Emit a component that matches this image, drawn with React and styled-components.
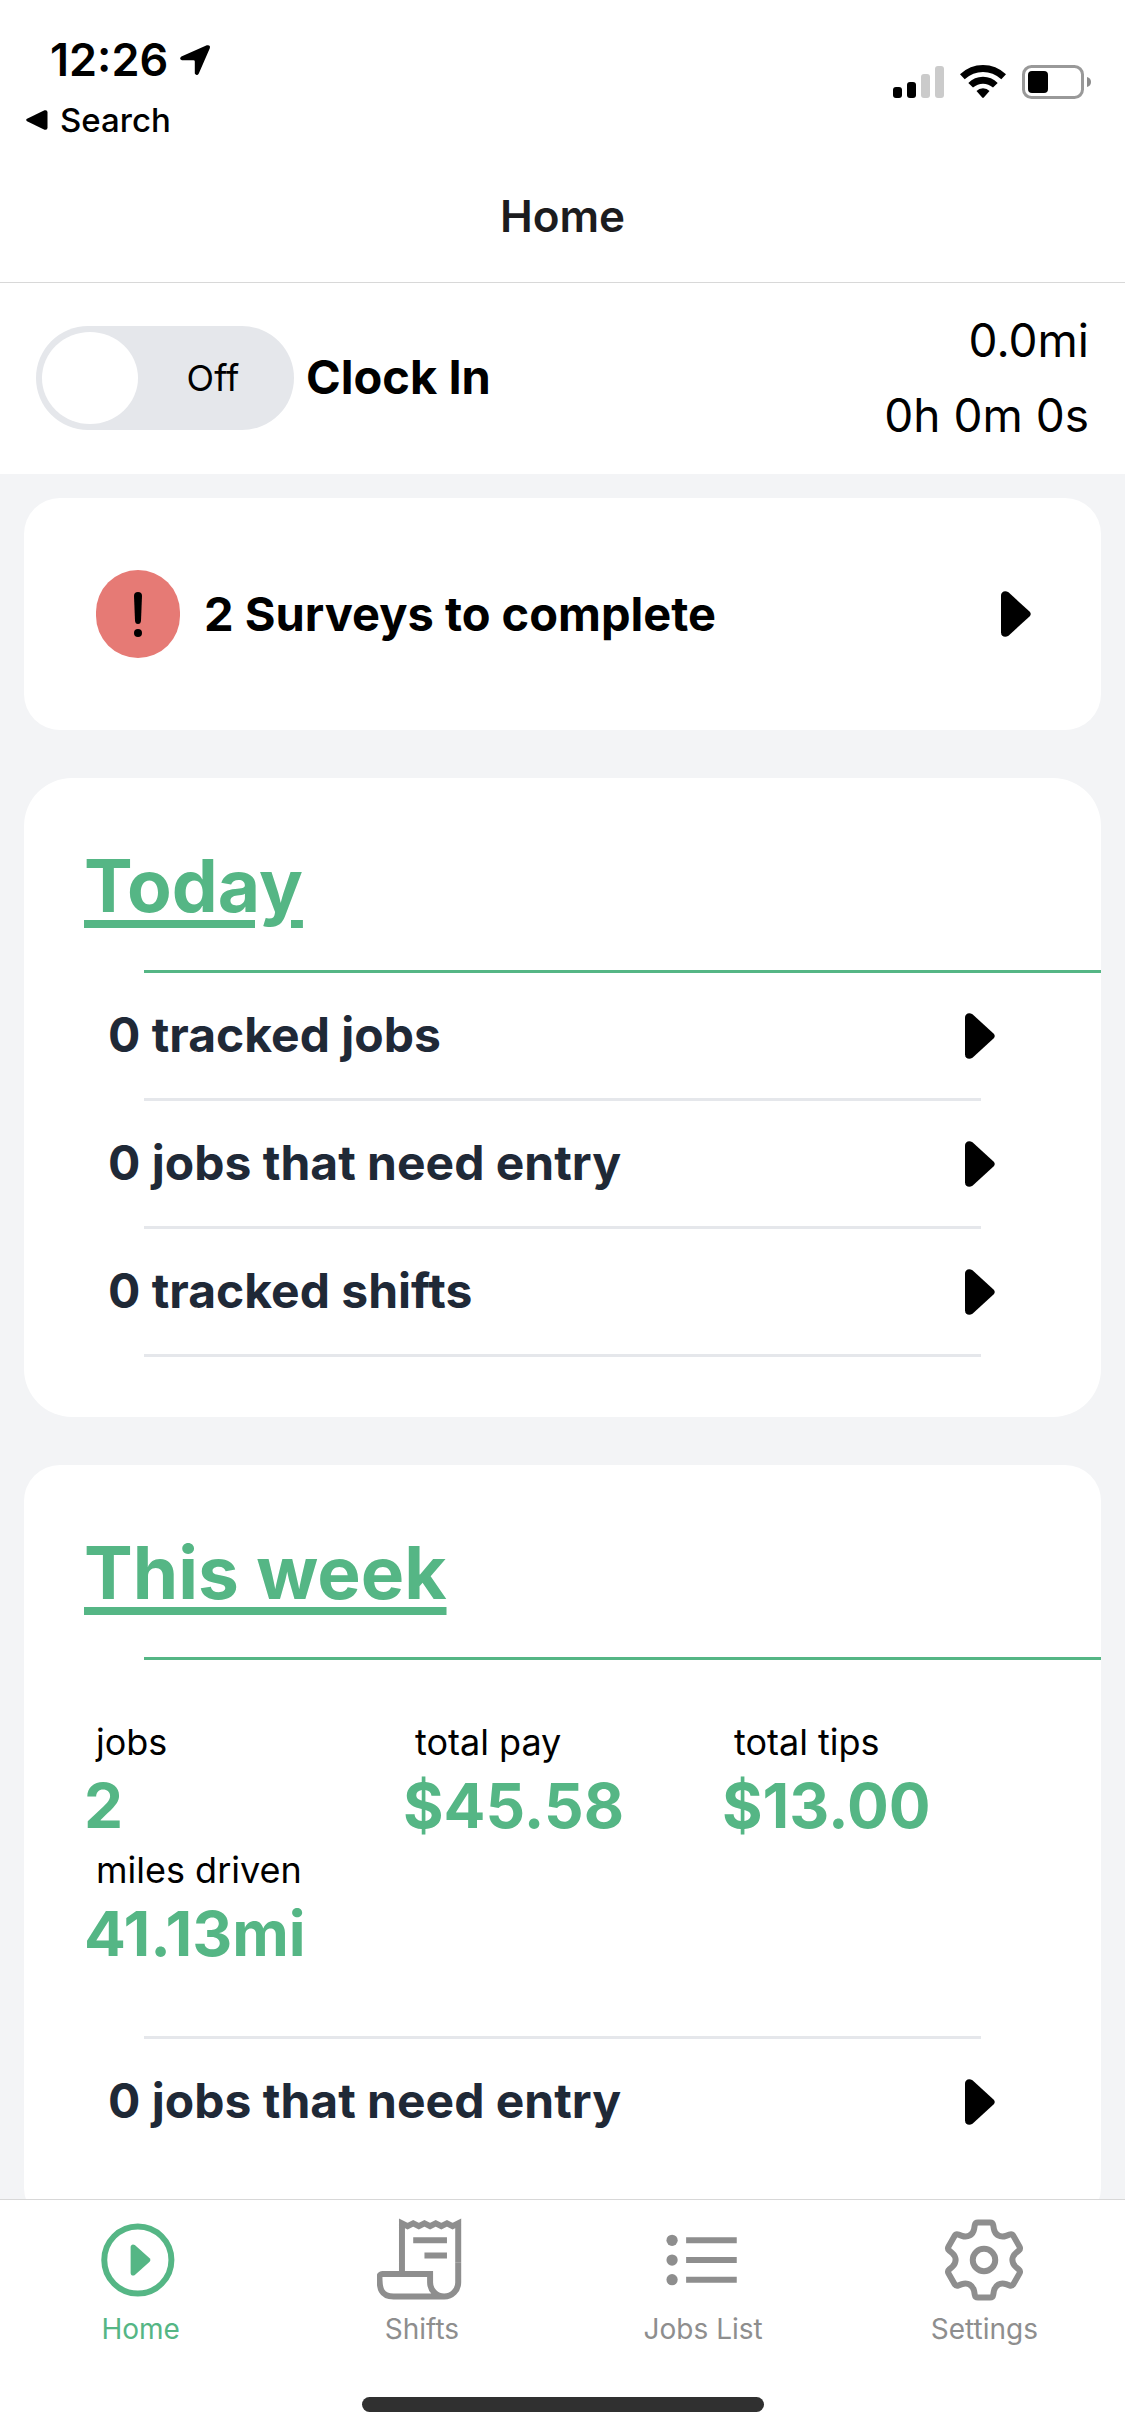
import React, { useState } from "react";
import styled, { createGlobalStyle } from "styled-components";

const color = {
  green: "#55b685",
  ink: "#1f2937",
  title: "#1c1c1e",
  canvas: "#f3f4f6",
  track: "#e5e7eb",
  hairline: "#d8d8d8",
  muted: "#8e8e8e",
  alert: "#e67a75",
};

const GlobalStyle = createGlobalStyle`
  *, *::before, *::after { box-sizing: border-box; }
  body { margin: 0; background: #fff; }
  button { border: 0; background: none; padding: 0; margin: 0; font: inherit; color: inherit; text-align: left; cursor: pointer; }
  h1, h2, dl, dd, p, ul { margin: 0; padding: 0; }
`;

const Screen = styled.div`
  display: flex;
  flex-direction: column;
  height: 100vh;
  background: #fff;
  color: #000;
  font-family: Inter, "Liberation Sans", sans-serif;
`;

/* Status bar */
const StatusBar = styled.div`
  display: flex;
  justify-content: space-between;
  align-items: flex-start;
  padding: 30px 34px 0 26px;
`;

const Clock = styled.div`
  display: flex;
  align-items: center;
  gap: 12px;
  padding-left: 24px;
  font-size: 45px;
  font-weight: 600;
  line-height: 60px;
`;

const BackButton = styled.button`
  display: flex;
  align-items: center;
  gap: 12px;
  font-size: 33px;
  font-weight: 500;
  line-height: 60px;
`;

const StatusIcons = styled.div`
  display: flex;
  align-items: center;
  gap: 16px;
  padding-top: 35px;
`;

/* Header */
const Header = styled.header`
  border-bottom: 1px solid ${color.hairline};
`;

const PageTitle = styled.h1`
  font-size: 44px;
  font-weight: 600;
  line-height: 132px;
  text-align: center;
  color: ${color.title};
`;

/* Clock-in strip */
const ClockStrip = styled.section`
  display: flex;
  align-items: center;
  justify-content: space-between;
  padding: 20px 36px 21px;
`;

const SwitchLabel = styled.label`
  display: flex;
  align-items: center;
  gap: 12px;
  font-size: 47px;
  font-weight: 700;
  cursor: pointer;
`;

const SwitchText = styled.span`
  padding-bottom: 4px;
`;

const SwitchInput = styled.input`
  position: absolute;
  opacity: 0;
`;

const Track = styled.span`
  display: flex;
  flex-direction: ${(p) => (p.$on ? "row-reverse" : "row")};
  align-items: center;
  width: 258px;
  height: 104px;
  padding: 6px;
  border-radius: 52px;
  background: ${(p) => (p.$on ? color.green : color.track)};
`;

const Knob = styled.span`
  width: 96px;
  height: 92px;
  border-radius: 50%;
  background: #fff;
`;

const SwitchState = styled.span`
  flex: 1;
  text-align: center;
  font-size: 36px;
  font-weight: 400;
`;

const Readout = styled.div`
  text-align: right;
  font-size: 46px;
  line-height: 75px;
`;

/* Scrolling content */
const Content = styled.main`
  flex: 1;
  min-height: 0;
  overflow-y: auto;
  scrollbar-width: none;
  display: flex;
  flex-direction: column;
  gap: 48px;
  padding: 24px;
  background: ${color.canvas};
`;

const Card = styled.section`
  flex: none;
  padding: 60px 0;
  border-radius: ${(p) => p.$radius}px;
  background: #fff;
`;

const SurveyCard = styled.button`
  flex: none;
  display: flex;
  align-items: center;
  gap: 24px;
  padding: 72px 70px 72px 72px;
  border-radius: 36px;
  background: #fff;
  font-size: 47px;
  font-weight: 700;
`;

const AlertBadge = styled.span`
  display: flex;
  align-items: center;
  justify-content: center;
  width: 84px;
  height: 88px;
  border-radius: 42px;
  background: ${color.alert};
`;

const Grow = styled.span`
  flex: 1;
  padding-bottom: 2px;
`;

const CardTitle = styled.h2`
  padding: 0 60px;
  margin-bottom: 36px;
  font-size: 73px;
  font-weight: 700;
  line-height: 96px;
  color: ${color.green};
  text-decoration: underline;
  text-decoration-thickness: 8px;
  text-underline-offset: 8px;
`;

const Rule = styled.hr`
  height: 3px;
  margin: 0 ${(p) => (p.$accent ? 0 : 120)}px 0 120px;
  border: 0;
  background: ${(p) => (p.$accent ? color.green : color.track)};
`;

const Row = styled.button`
  display: flex;
  align-items: center;
  width: 100%;
  height: 125px;
  padding: 0 106px 0 84px;
  font-size: 48px;
  font-weight: 700;
  color: ${color.ink};
`;

const Stats = styled.dl`
  display: grid;
  grid-template-columns: repeat(3, 1fr);
  padding: 58px 60px 62px;
`;

const StatLabel = styled.dt`
  padding-left: 12px;
  font-size: 36px;
  line-height: 48px;
`;

const StatValue = styled.dd`
  font-size: 62px;
  font-weight: 700;
  line-height: 80px;
  color: ${color.green};
`;

/* Bottom navigation */
const TabBar = styled.nav`
  border-top: 1px solid ${color.hairline};
  background: #fff;
`;

const Tabs = styled.div`
  display: grid;
  grid-template-columns: repeat(4, 1fr);
  padding: 15px 0 50px;
`;

const Tab = styled.a`
  display: flex;
  flex-direction: column;
  align-items: center;
  gap: 6px;
  font-size: 28px;
  line-height: 36px;
  text-decoration: none;
  color: ${(p) => (p.$active ? color.green : color.muted)};
`;

const HomeIndicator = styled.div`
  width: 402px;
  height: 15px;
  margin: 0 auto 24px;
  border-radius: 8px;
  background: #303030;
`;

/* Icons */
const Caret = () => (
  <svg width="30" height="46" viewBox="0 0 30 46" aria-hidden="true">
    <path d="M0 4.5C0 .6 4 -1 7.500 1.300L28.500 20.500Q31 23 28.500 25.500L7.500 44.700C4 47 0 45.400 0 41.500Z" />
  </svg>
);

const LocationArrow = () => (
  <svg width="30" height="30" viewBox="0 0 30 30" aria-hidden="true">
    <path d="M1.400 11.600L26.800.3Q30.800 -.6 29.800 3.200L18.800 28.600Q17 31.500 14.800 28.600V16.500Q14.800 15.200 13.500 15.200H2Q-1.400 14 1.400 11.600Z" />
  </svg>
);

const BackTriangle = () => (
  <svg width="22" height="20" viewBox="0 0 22 20" aria-hidden="true">
    <path d="M1 8.800L18.500.3Q21.500 -.5 21.500 2.500V17.500Q21.500 20.500 18.500 19.700L1 11.200Q-.6 10 1 8.800Z" />
  </svg>
);

const Signal = () => (
  <svg width="51" height="34" viewBox="0 0 51 34" aria-label="Signal">
    <rect x="0" y="22" width="9" height="11" rx="3" />
    <rect x="14" y="17" width="9" height="16" rx="3" />
    <rect x="28" y="9" width="9" height="24" rx="3" fill="#cbcbcb" />
    <rect x="42" y="1" width="9" height="32" rx="3" fill="#cbcbcb" />
  </svg>
);

const Wifi = () => (
  <svg width="46" height="34" viewBox="0 0 46 34" aria-label="Wi-Fi">
    <path d="M0 9.200Q10 0 23 0T46 9.200L41.300 14.200Q33 7 23 7T4.700 14.200Z" />
    <path d="M8.300 18Q14.500 11.700 23 11.700T37.700 18L33 22.600Q28.500 18.700 23 18.700T13 22.600Z" />
    <path d="M16.500 26Q19 23.200 23 23.200T29.500 26L23.800 32.600Q23 33.300 22.200 32.600Z" />
  </svg>
);

const Battery = () => (
  <svg width="69" height="34" viewBox="0 0 69 34" aria-label="Battery">
    <rect x="1.500" y="1.500" width="59" height="31" rx="8" fill="none" stroke="#999" strokeWidth="3" />
    <rect x="6" y="6" width="20" height="22" rx="4" />
    <path d="M65 12Q69 13 69 17T65 22Z" fill="#8c8c8c" />
  </svg>
);

const Exclamation = () => (
  <svg width="8" height="45" viewBox="0 0 8 45" aria-hidden="true">
    <path d="M0 4Q0 0 4 0T8 4L7 28.500Q6.800 32 4 32T1 28.500Z" />
    <circle cx="4" cy="41" r="4" />
  </svg>
);

const TabIcon = ({ shift = 0, children }) => (
  <svg
    width="90"
    height="90"
    viewBox={`${shift} 0 512 512`}
    fill="none"
    stroke="currentColor"
    strokeWidth="34"
    aria-hidden="true"
  >
    {children}
  </svg>
);

const HomeIcon = () => (
  <TabIcon shift={18}>
    <circle cx="256" cy="256" r="191" />
    <path
      fill="currentColor"
      stroke="none"
      d="M215 182C215 168 229 163 239 171L323 246Q333 256 323 266L239 341C229 349 215 344 215 330Z"
    />
  </TabIcon>
);

const ShiftsIcon = () => (
  <TabIcon shift={18}>
    <path d="M160 336V48l32 16 32-16 32 16 32-16 32 16 32-16 32 16 32-16 32 16 32-16v224" />
    <path d="M480 272v112a80 80 0 0 1-160 0v-48H48a16 16 0 0 0-16 16c0 64 7 112 80 112h288" />
    <path d="M224 144h192M288 230h128" />
  </TabIcon>
);

const ListIcon = () => (
  <TabIcon>
    <path d="M160 144h288M160 256h288M160 368h288" />
    <g fill="currentColor" stroke="none">
      <circle cx="80" cy="144" r="32" />
      <circle cx="80" cy="256" r="32" />
      <circle cx="80" cy="368" r="32" />
    </g>
  </TabIcon>
);

const polar = (deg, r) => {
  const a = (deg * Math.PI) / 180;
  return [256 + r * Math.sin(a), 256 - r * Math.cos(a)];
};

const gearPoints = [0, 60, 120, 180, 240, 300].flatMap((t) => [
  { p: polar(t - 21.8, 163), r: 26 },
  { p: polar(t - 13.2, 219), r: 16 },
  { p: polar(t + 13.2, 219), r: 16 },
  { p: polar(t + 21.8, 163), r: 26 },
]);

const toward = ([x1, y1], [x2, y2], d) => {
  const k = d / Math.hypot(x2 - x1, y2 - y1);
  return `${x1 + (x2 - x1) * k} ${y1 + (y2 - y1) * k}`;
};

const gearPath =
  gearPoints
    .map(({ p, r }, i) => {
      const n = gearPoints.length;
      const prev = gearPoints[(i + n - 1) % n].p;
      const next = gearPoints[(i + 1) % n].p;
      return `${i ? "L" : "M"}${toward(p, prev, r)}Q${p[0]} ${p[1]} ${toward(p, next, r)}`;
    })
    .join("") + "Z";

const SettingsIcon = () => (
  <TabIcon>
    <path d={gearPath} />
    <circle cx="256" cy="256" r="64" />
  </TabIcon>
);

const LinkRow = ({ children }) => (
  <Row type="button">
    <Grow>{children}</Grow>
    <Caret />
  </Row>
);

const todayRows = ["0 tracked jobs", "0 jobs that need entry", "0 tracked shifts"];

const weekStats = [
  ["jobs", "2"],
  ["total pay", "$45.58"],
  ["total tips", "$13.00"],
  ["miles driven", "41.13mi"],
];

const tabs = [
  ["Home", HomeIcon],
  ["Shifts", ShiftsIcon],
  ["Jobs List", ListIcon],
  ["Settings", SettingsIcon],
];

export default function App() {
  const [on, setOn] = useState(false);

  return (
    <Screen>
      <GlobalStyle />
      <StatusBar>
        <div>
          <Clock>
            12:26
            <LocationArrow />
          </Clock>
          <BackButton type="button">
            <BackTriangle />
            Search
          </BackButton>
        </div>
        <StatusIcons>
          <Signal />
          <Wifi />
          <Battery />
        </StatusIcons>
      </StatusBar>

      <Header>
        <PageTitle>Home</PageTitle>
      </Header>

      <ClockStrip>
        <SwitchLabel>
          <SwitchInput type="checkbox" role="switch" checked={on} onChange={() => setOn(!on)} />
          <Track $on={on}>
            <Knob />
            <SwitchState>{on ? "On" : "Off"}</SwitchState>
          </Track>
          <SwitchText>Clock In</SwitchText>
        </SwitchLabel>
        <Readout>
          <p>0.0mi</p>
          <p>0h 0m 0s</p>
        </Readout>
      </ClockStrip>

      <Content>
        <SurveyCard type="button">
          <AlertBadge>
            <Exclamation />
          </AlertBadge>
          <Grow>2 Surveys to complete</Grow>
          <Caret />
        </SurveyCard>

        <Card $radius={48}>
          <CardTitle>Today</CardTitle>
          <Rule $accent />
          {todayRows.map((text) => (
            <React.Fragment key={text}>
              <LinkRow>{text}</LinkRow>
              <Rule />
            </React.Fragment>
          ))}
        </Card>

        <Card $radius={36}>
          <CardTitle>This week</CardTitle>
          <Rule $accent />
          <Stats>
            {weekStats.map(([label, value]) => (
              <div key={label}>
                <StatLabel>{label}</StatLabel>
                <StatValue>{value}</StatValue>
              </div>
            ))}
          </Stats>
          <Rule />
          <LinkRow>0 jobs that need entry</LinkRow>
        </Card>
      </Content>

      <TabBar>
        <Tabs>
          {tabs.map(([name, Icon], i) => (
            <Tab key={name} href={`#${name.toLowerCase().replace(" ", "-")}`} $active={i === 0}>
              <Icon />
              {name}
            </Tab>
          ))}
        </Tabs>
        <HomeIndicator />
      </TabBar>
    </Screen>
  );
}
